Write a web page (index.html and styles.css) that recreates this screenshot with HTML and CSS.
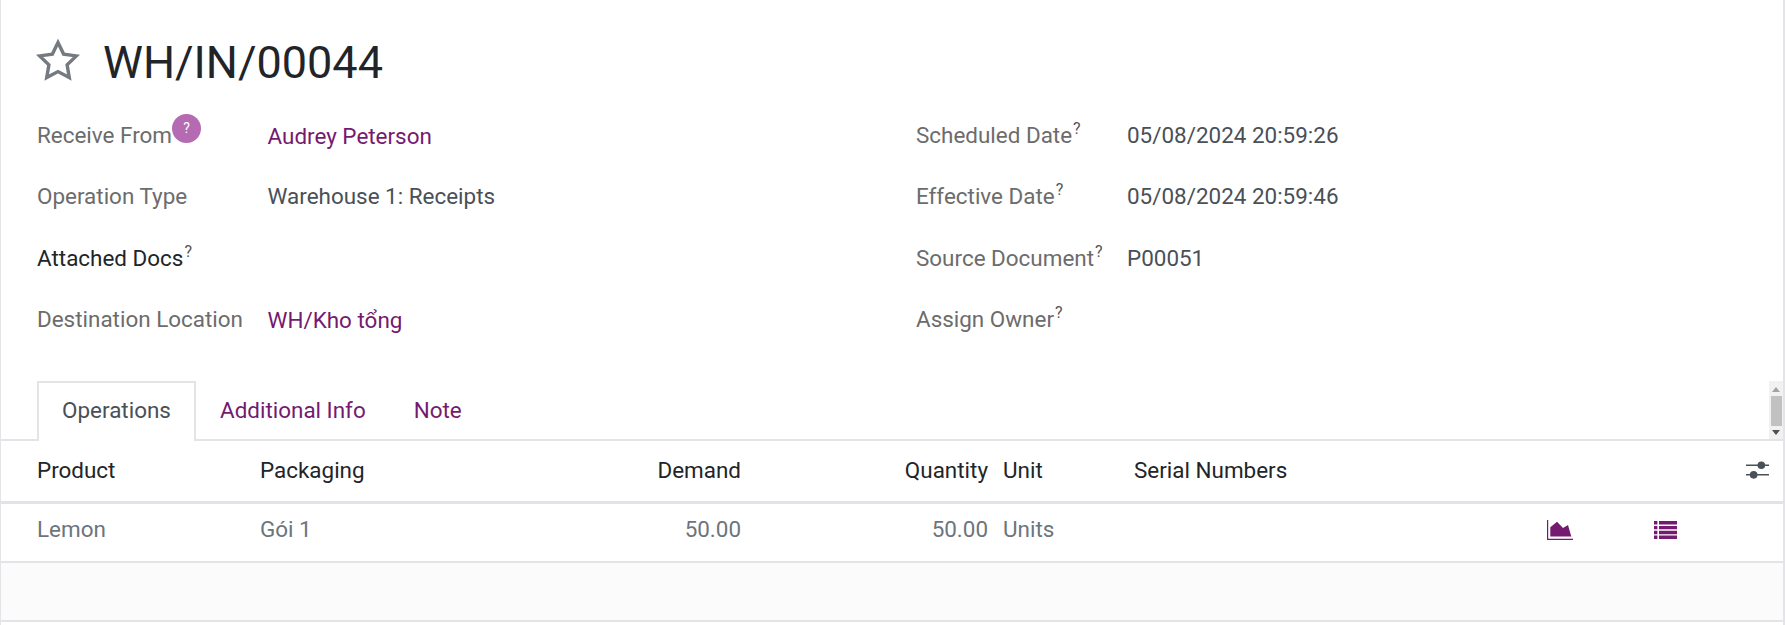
FILE: index.html
```html
<!DOCTYPE html>
<html lang="vi">
<head>
<meta charset="utf-8">
<title>WH/IN/00044</title>
<link rel="stylesheet" href="styles.css">
</head>
<body>
<main class="sheet">
  <header class="title-row">
    <svg class="star" viewBox="0 0 44 42" aria-hidden="true"><path d="M22 3.5l5.6 11.6 12.8 1.8-9.3 9 2.2 12.7L22 32.6l-11.3 6 2.2-12.7-9.3-9 12.8-1.8z"/></svg>
    <h1 class="title">WH/IN/00044</h1>
  </header>
  <section class="form">
    <div class="col col-left">
      <div class="field">
        <span class="label">Receive From<span class="help-badge">?</span></span>
        <a class="link">Audrey Peterson</a>
      </div>
      <div class="field">
        <span class="label">Operation Type</span>
        <span class="value">Warehouse 1: Receipts</span>
      </div>
      <div class="field">
        <span class="label strong">Attached Docs<sup class="q">?</sup></span>
      </div>
      <div class="field">
        <span class="label">Destination Location</span>
        <a class="link">WH/Kho tổng</a>
      </div>
    </div>
    <div class="col col-right">
      <div class="field">
        <span class="label">Scheduled Date<sup class="q">?</sup></span>
        <span class="value">05/08/2024 20:59:26</span>
      </div>
      <div class="field">
        <span class="label">Effective Date<sup class="q">?</sup></span>
        <span class="value">05/08/2024 20:59:46</span>
      </div>
      <div class="field">
        <span class="label">Source Document<sup class="q">?</sup></span>
        <span class="value">P00051</span>
      </div>
      <div class="field">
        <span class="label">Assign Owner<sup class="q">?</sup></span>
      </div>
    </div>
  </section>
  <nav class="tabs">
    <a class="tab active">Operations</a>
    <a class="tab">Additional Info</a>
    <a class="tab">Note</a>
    <div class="scrollbar" aria-hidden="true">
      <span class="arrow up"></span>
      <span class="thumb"></span>
      <span class="arrow down"></span>
    </div>
  </nav>
  <section class="list">
    <div class="row head">
      <span>Product</span>
      <span>Packaging</span>
      <span class="num">Demand</span>
      <span class="num">Quantity</span>
      <span class="unit">Unit</span>
      <span>Serial Numbers</span>
      <span></span>
      <span></span>
      <svg class="sliders" viewBox="0 0 24 20" aria-hidden="true">
        <path d="M0 5h24M0 15h24"/>
        <circle cx="16" cy="5" r="4"/>
        <circle cx="8" cy="15" r="4"/>
      </svg>
    </div>
    <div class="row body">
      <span>Lemon</span>
      <span>Gói 1</span>
      <span class="num">50.00</span>
      <span class="num">50.00</span>
      <span class="unit">Units</span>
      <span></span>
      <svg class="icon chart" viewBox="0 0 26 20" aria-hidden="true">
        <path d="M0 0h1.2v18.8H26V20H0z"/>
        <path d="M3.3 16.5V7.3L10 1.7l6 6.3 5-3 3.3 11.5z"/>
      </svg>
      <svg class="icon bars" viewBox="0 0 23 18" aria-hidden="true">
        <path d="M0 0h3.4v3.4H0zM5 0h18v3.4H5zM0 4.9h3.4v3.4H0zM5 4.9h18v3.4H5zM0 9.8h3.4v3.4H0zM5 9.8h18v3.4H5zM0 14.6h3.4V18H0zM5 14.6h18V18H5z"/>
      </svg>
      <span></span>
    </div>
    <div class="row empty"></div>
  </section>
</main>
</body>
</html>
```
FILE: styles.css
```css
* { box-sizing: border-box; }
html, body { margin: 0; height: 100%; }
body {
  font-family: Roboto, "Noto Sans", sans-serif;
  font-size: 22.45px;
  line-height: 28px;
  color: #212529;
  background: #fff;
  overflow: hidden;
}
.sheet {
  height: 625px;
  border-left: 1px solid #e4e4e8;
  border-right: 2px solid #e4e4e8;
}
.title-row {
  display: flex;
  align-items: center;
  gap: 23px;
  height: 104px;
  padding: 21px 0 0 35px;
}
.star { width: 44px; height: 42px; flex: none; margin-top: -5px; }
.star path { fill: none; stroke: #747a80; stroke-width: 3.4; stroke-linejoin: miter; }
.title { margin: 0; font-size: 45px; line-height: 56px; font-weight: 400; color: #212529; }
.form { display: flex; height: 277px; padding: 0 0 0 36px; }
.col-left { width: 879px; }
.field { display: flex; align-items: center; height: 61.5px; }
.col-left .label { width: 230.5px; }
.col-right .label { width: 211px; }
.label { color: #6c6c6c; flex: none; position: relative; }
.label.strong { color: #212529; }
.value { color: #495057; }
.link { color: #741a71; padding-top: 2px; }
.q { font-size: 16px; line-height: 0; margin-left: 1px; vertical-align: 9px; color: #555; }
.help-badge {
  position: absolute;
  left: 135px;
  top: -7px;
  width: 29px;
  height: 29px;
  border-radius: 50%;
  background: #b56bb2;
  color: #fff;
  font-size: 14px;
  line-height: 28px;
  text-align: center;
}
.tabs {
  display: flex;
  height: 60px;
  padding-left: 36px;
  border-bottom: 2px solid #e4e4e8;
  position: relative;
}
.tab {
  display: block;
  height: 60px;
  padding: 13px 22px 0;
  color: #741a71;
  border: 2px solid transparent;
  border-bottom: 0;
}
.tab.active {
  width: 159px;
  color: #495057;
  background: #fff;
  border-color: #e4e4e8;
  text-align: center;
  padding-left: 0;
  padding-right: 0;
}
.scrollbar {
  position: absolute;
  right: 0;
  top: 0;
  bottom: 0;
  width: 14px;
  background: #f1f1f1;
  display: flex;
  flex-direction: column;
  align-items: center;
}
.thumb { width: 11px; height: 30px; background: #c1c1c1; margin-left: 1px; }
.arrow { width: 0; height: 0; border-left: 4px solid transparent; border-right: 4px solid transparent; }
.arrow.up { border-bottom: 5px solid #a3a3a3; margin: 6px 0 4px; }
.arrow.down { border-top: 5px solid #505050; margin-top: 4px; }
.row {
  display: grid;
  grid-template-columns: 223px 240px 241px 247px 146px 413px 107px 92px 23px;
  align-items: center;
  padding-left: 36px;
}
.head { height: 63px; padding-bottom: 2px; border-bottom: 3px solid #e2e2e8; }
.body { height: 59px; padding-bottom: 7px; border-bottom: 2px solid #e4e4e8; color: #6c757d; }
.empty { height: 59px; background: #fbfbfc; border-bottom: 2px solid #e4e4e8; }
.num { text-align: right; }
.unit { padding-left: 15px; }
.sliders { width: 23px; height: 20px; }
.sliders path { stroke: #495057; stroke-width: 1.6; fill: none; }
.sliders circle { fill: #495057; }
.icon { fill: #741a71; margin-top: 2px; }
.chart { width: 26px; height: 20px; }
.bars { width: 23px; height: 18px; }
```
